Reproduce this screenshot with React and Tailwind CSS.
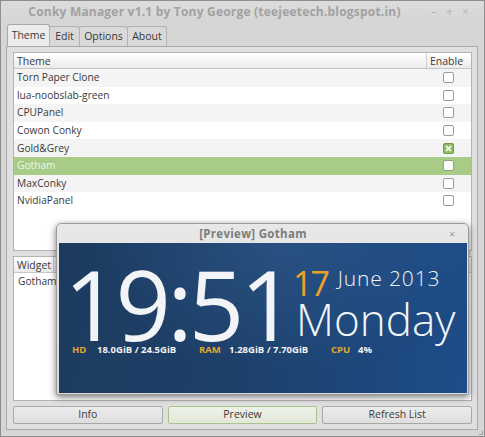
import React from "react";

const themes = [
  "Torn Paper Clone",
  "lua-noobslab-green",
  "CPUPanel",
  "Cowon Conky",
  "Gold&Grey",
  "Gotham",
  "MaxConky",
  "NvidiaPanel",
];

function Check({ checked, onGreen }) {
  if (checked) {
    return (
      <div className="w-[11px] h-[11px] rounded-[2px] border border-[#6e9a4a] bg-[#8fbe66] flex items-center justify-center">
        <svg width="7" height="7" viewBox="0 0 7 7">
          <path d="M1 1L6 6M6 1L1 6" stroke="#ffffff" strokeWidth="1.6" />
        </svg>
      </div>
    );
  }
  return (
    <div
      className={
        "w-[11px] h-[11px] rounded-[2px] border bg-white " +
        (onGreen ? "border-[#8aa872]" : "border-[#9c9c9c]")
      }
    />
  );
}

function Tab({ label, active, w }) {
  return (
    <div
      className={
        "flex items-center justify-center border border-b-0 rounded-t-[3px] text-[10.5px] text-[#3a3a3a] " +
        (active
          ? "h-[22px] bg-[#ececec] border-[#a9a9a9]"
          : "h-[20px] bg-[#d9d9d9] border-[#b3b3b3] -ml-[1px]")
      }
      style={{ width: w }}
    >
      {label}
    </div>
  );
}

function Button({ label, green }) {
  return (
    <div
      className={
        "flex-1 h-[18px] rounded-[2px] border flex items-center justify-center text-[10.5px] text-[#3a3a3a] " +
        (green
          ? "border-[#a9c28e] bg-[linear-gradient(#eef1e8,#e2e8d8)]"
          : "border-[#a8a8a8] bg-[linear-gradient(#ececec,#dedede)]")
      }
    >
      {label}
    </div>
  );
}

export default function App() {
  return (
    <div className="w-[485px] h-[437px] bg-[#d6d6d6] border border-[#8e8e8e] flex flex-col relative overflow-hidden font-['Open_Sans',sans-serif]">
      {/* Title bar */}
      <div className="h-[21px] flex items-center shrink-0 bg-[linear-gradient(#dcdcdc,#d5d5d5)]">
        <div className="w-[427px] text-center text-[12px] font-bold text-[#a1a1a1] tracking-[0.2px]">
          Conky Manager v1.1 by Tony George (teejeetech.blogspot.in)
        </div>
        <div className="flex items-center gap-[9px] text-[#b4b4b4] text-[12px] ml-[3px]">
          <span>–</span>
          <span>+</span>
          <span>×</span>
        </div>
      </div>

      {/* Tabs */}
      <div className="h-[24px] flex items-end pl-[6px] shrink-0">
        <Tab label="Theme" active w={43} />
        <Tab label="Edit" w={31} />
        <Tab label="Options" w={49} />
        <Tab label="About" w={40} />
      </div>

      {/* Notebook frame */}
      <div className="ml-[5px] mr-[6px] h-[384px] border border-[#a9a9a9] bg-[#e0e0e0] pt-[5px] pl-[6px] pr-[5px] pb-[5px] flex flex-col gap-[5px]">
        {/* Themes tree */}
        <div className="h-[199px] border border-[#b4b4b4] bg-white flex flex-col shrink-0">
          <div className="h-[16px] flex bg-[linear-gradient(#ffffff,#ebebeb)] border-b border-[#c6c6c6] text-[10.5px] text-[#3a3a3a] leading-[16px]">
            <div className="flex-1 pl-[3px]">Theme</div>
            <div className="w-[45px] border-l border-[#d0d0d0] pl-[3px]">Enable</div>
          </div>
          {themes.map((t, i) => {
            const sel = t === "Gotham";
            return (
              <div
                key={t}
                className={
                  "h-[17.6px] flex items-center text-[10.2px] " +
                  (sel
                    ? "bg-[#a8cc87] text-[#eef5e6]"
                    : i % 2 === 0
                    ? "bg-[#f4f4f4] text-[#3a3a3a]"
                    : "bg-white text-[#3a3a3a]")
                }
              >
                <div className="flex-1 pl-[3px]">{t}</div>
                <div className="w-[45px] pl-[17px] flex items-center">
                  <Check checked={t === "Gold&Grey"} onGreen={sel} />
                </div>
              </div>
            );
          })}
        </div>

        {/* Widget tree */}
        <div className="h-[145px] border border-[#b4b4b4] bg-white flex flex-col shrink-0">
          <div className="h-[16px] flex bg-[linear-gradient(#ffffff,#ebebeb)] border-b border-[#c6c6c6] text-[10.5px] text-[#3a3a3a] leading-[16px]">
            <div className="w-[40px] pl-[3px] border-r border-[#d0d0d0]">Widget</div>
            <div className="flex-1"></div>
          </div>
          <div className="h-[17.6px] flex items-center text-[10.2px] text-[#3a3a3a] pl-[4px]">
            Gotham
          </div>
        </div>

        {/* Buttons */}
        <div className="flex gap-[5px] shrink-0">
          <Button label="Info" />
          <Button label="Preview" green />
          <Button label="Refresh List" />
        </div>
      </div>

      {/* resize grip */}
      <div className="absolute right-[1px] bottom-[1px] w-[4px] h-[4px] border-r border-b border-[#a0a0a0]" />

      {/* Preview window */}
      <div className="absolute left-[55px] top-[222px] w-[413px] h-[172px] rounded-t-[5px] border border-[#9c9c9c] bg-[linear-gradient(#e8e8e8,#d9d9d9)] shadow-[0_2px_7px_rgba(0,0,0,0.55)] flex flex-col">
        <div className="h-[19px] flex items-center shrink-0">
          <div className="w-[392px] text-center text-[11.5px] font-bold text-[#7c7c7c] tracking-[0.3px]">
            [Preview] Gotham
          </div>
          <div className="text-[11px] text-[#9a9a9a] leading-none">×</div>
        </div>
        <div className="ml-[2px] mr-[1px] mb-[1px] h-[150px] bg-[radial-gradient(ellipse_at_55%_0%,rgba(60,110,170,0.35)_0%,rgba(0,0,0,0)_60%),linear-gradient(100deg,#1d3b5f_0%,#1d4069_45%,#1d4d8a_100%)] pt-[22px] flex flex-col text-white">
          <div className="flex">
            <div className="w-[234px] shrink-0 pl-[5px] text-[97px] leading-[0.8] font-normal tracking-[-0.04em] text-[#f2f4f7]">
              19:51
            </div>
            <div className="flex flex-col mt-[1px]">
              <div className="flex items-start">
                <span className="text-[34px] leading-none font-normal text-[#eda126] tracking-[-0.06em]">17</span>
                <span className="text-[21px] leading-none font-light text-[#f2f4f7] ml-[10px] mt-[2px] tracking-[0.04em]">
                  June 2013
                </span>
              </div>
              <div className="text-[44px] leading-none font-light text-[#f2f4f7] -mt-[3px] ml-[3px] tracking-[0em]">
                Monday
              </div>
            </div>
          </div>
          <div className="flex items-center text-[9.5px] font-bold leading-[12px] mt-[1px] pl-[13px]">
            <span className="w-[25px] text-[#e4a62a]">HD</span>
            <span className="w-[102px] text-[#f2f4f7]">18.0GiB / 24.5GiB</span>
            <span className="w-[30px] text-[#e4a62a]">RAM</span>
            <span className="w-[102px] text-[#f2f4f7]">1.28GiB / 7.70GiB</span>
            <span className="w-[27px] text-[#e4a62a]">CPU</span>
            <span className="text-[#f2f4f7]">4%</span>
          </div>
        </div>
      </div>
    </div>
  );
}
